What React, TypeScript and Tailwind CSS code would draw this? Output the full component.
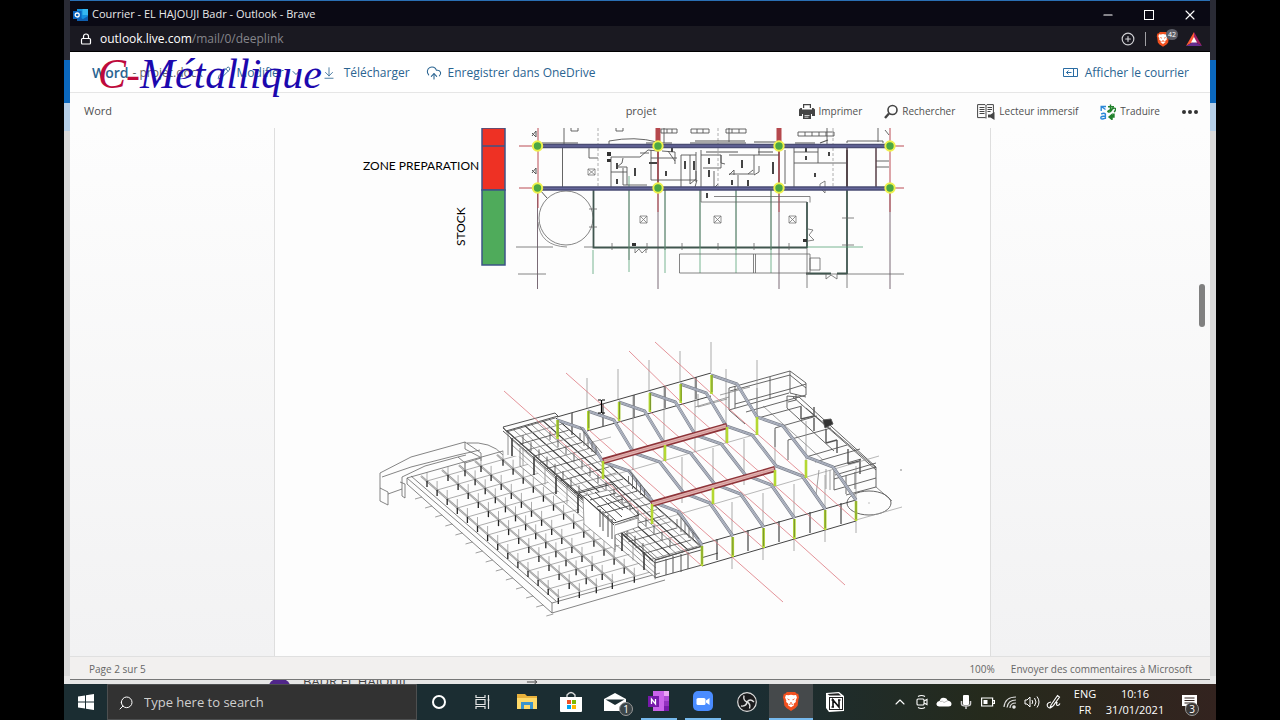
import type { ReactNode } from 'react';
import { ArrowDownToLine, ArrowRight, ChevronDown, ChevronUp, CirclePlus, CloudUpload, Lock, Minus, Pencil, Search, X } from 'lucide-react';

type Point = [number, number];

const toPoints = (pts: Point[]) => pts.map((p) => p.join(',')).join(' ');
const range = (n: number) => Array.from({ length: n }, (_, i) => i);

function OutlookIcon() {
  return (
    <svg viewBox="0 0 16 14" className="h-3.5 w-4">
      <path d="M4 1h11v12H4z" fill="#1490df" />
      <path d="M9.5 1H15v6H9.5z" fill="#35b8f1" />
      <path d="M4 8l6 3 5-3v5H4z" fill="#0f5fb0" />
      <path d="M0 3h8.5v8H0z" fill="#0a63bd" />
      <circle cx="4.2" cy="7" r="2" fill="none" stroke="#fff" strokeWidth="1.3" />
    </svg>
  );
}

function BraveIcon({ className }: { className: string }) {
  return (
    <svg viewBox="0 0 20 22" className={className}>
      <path d="M5.5 1h9l2 2H18l1 4-.7 2-.9 7-2.4 2.7L10 22l-5-3.3L2.6 16 1.7 9 1 7l1-4h1.500z" fill="#f1501f" />
      <path d="M10 4l3 .6 2.600-.4 1 3-1.400 3.200.2 1.800-2.400 1.800.4 1.600L10 18l-3.400-2.400.4-1.600-2.400-1.800.2-1.800L3.400 7.200l1-3L7 4.600z" fill="#fff" />
      <path d="M5.2 8l3.3 1.200-.6 1.300zM14.800 8l-3.300 1.200.6 1.300zM8.800 12.500h2.400L10 13.800z" fill="#f1501f" />
      <path d="M7.500 15l2.500-1 2.500 1" stroke="#f1501f" fill="none" />
    </svg>
  );
}

function BatIcon() {
  return (
    <svg viewBox="0 0 16 14" className="h-3.5 w-4">
      <path d="M8 0L0 14l8-4.500z" fill="#ff5a35" />
      <path d="M8 0l8 14-8-4.500z" fill="#9e1f63" />
      <path d="M0 14h16L8 9.500z" fill="#662d91" />
      <path d="M8 5l-3 5.500h6z" fill="#fff" />
    </svg>
  );
}

function PaneIcon() {
  return (
    <svg viewBox="0 0 16 10" className="h-2.5 w-4" fill="none" stroke="#2a6da4">
      <path d="M.5.5h14v8H.5zM10.500.5v8M3.500 4.500h5M5.500 2.500l-2 2 2 2" />
    </svg>
  );
}

function PrinterIcon() {
  return (
    <svg viewBox="0 0 16 16" className="size-4" fill="#444">
      <path d="M4 0h8v4h-1.200V1.200H5.200V4H4z" />
      <path d="M1.500 4H3v1.500h10V4h1.500L16 5.500V12h-3v-2H3v2H0V5.500z" />
      <path d="M4 9.500h8V15H4zM5.500 11v.8h5V11zm0 1.800v.8h4v-.8z" fillRule="evenodd" />
    </svg>
  );
}

function LoupeIcon() {
  return (
    <svg viewBox="0 0 14 16" className="h-4 w-3.5" fill="none" stroke="#444">
      <circle cx="8.500" cy="6" r="4.500" strokeWidth="1.600" />
      <path d="M5 9.500l-4 4.500" strokeWidth="2.400" />
    </svg>
  );
}

function ReaderIcon() {
  return (
    <svg viewBox="0 0 18 16" className="h-4 w-[18px]" fill="none" stroke="#444">
      <path d="M.6 .6h7.400l1 1 1-1h6.400v9M.6 .6v13h8M9 1.500v13M2.500 3.500h5M2.500 5.500h5M2.500 7.500h5M2.500 9.500h5M10.500 3.500h4.500M10.500 5.500h4.500M10.500 7.500h3" />
      <path d="M11 10.500h2.500l4-2.500v8l-4-2.500H11z" fill="#444" stroke="none" />
    </svg>
  );
}

function TranslateIcon() {
  return (
    <svg viewBox="0 0 16 16" className="size-4" fill="none" strokeWidth="1.400">
      <path d="M6 2.500H1.200V7M1.200 2.500L5.500 5.500" stroke="#2b88d8" />
      <path d="M1.200 10q3-1.500 4.200 0v5M5.400 12Q.6 12 .8 14t4.600.2" stroke="#2b88d8" />
      <path d="M8 2.800h6M10.500.5v7.500M13 3.800q-2 4.700-4.500 4.200T12 5t2.200 3.200" stroke="#21812c" />
      <path d="M14 9.500V13H9.500M12 15.500l-3-2.500L12 10.500z" stroke="#21812c" fill="#21812c" />
    </svg>
  );
}

function Rafters() {
  // six portal frames, each shifted by one bay along the ridge
  const frame: Point[] = [[557, 420], [583, 429], [603, 462], [629, 471], [653, 502], [679, 512], [702, 545]];
  return (
    <g fill="none" strokeLinejoin="round">
      {range(6).map((i) => {
        const pts = toPoints(frame.map(([x, y]) => [x + i * 30.8, y - i * 9]));
        return (
          <g key={i}>
            <polyline points={pts} stroke="#7c818c" strokeWidth="3.2" />
            <polyline points={pts} stroke="#c3c8d6" strokeWidth="1.8" />
            <polyline points={pts} stroke="#858b99" strokeWidth=".6" />
          </g>
        );
      })}
    </g>
  );
}

function StockGrid() {
  const rows = [0, 21, 38, 54, 76];
  return (
    <g fill="none">
      <path d="M407 478l145 125 108-30M407 478v6l145 129 113-33M552 603v10M407 478l96-27M411 476l145 125" stroke="#666" strokeWidth=".8" />
      {[...rows, 92].map((dx) => (
        <g key={dx}>
          <path d={`M${421 + dx} ${476 - dx * 0.28}l138 121`} stroke="#999" strokeWidth="2" />
          <path d={`M${421 + dx} ${476 - dx * 0.28}l138 121`} stroke="#ddd" strokeWidth=".6" />
        </g>
      ))}
      {range(14).map((j) => {
        const x = 427 + j * 10.1;
        const y = 481 + j * 9;
        return (
          <g key={j}>
            <path d={`M${x} ${y}l92 -26`} stroke="#888" strokeWidth=".7" />
            <path d={`M${x - 12} ${y + 18}l7 -2`} stroke="#777" strokeWidth=".7" />
            {rows.map((dx) => (
              <g key={dx}>
                <path d={`M${x + dx} ${y - dx * 0.28 - 9}v10`} stroke="#888" strokeWidth=".7" />
                <path d={`M${x + dx} ${y - dx * 0.28}v6`} stroke="#222" strokeWidth="1.3" />
              </g>
            ))}
          </g>
        );
      })}
    </g>
  );
}

function Mezzanine() {
  return (
    <g fill="none">
      <path d="M503 429l53-15 146 131-46 15v18L520 457l-12-3z" fill="#fdfdfd" />
      <path d="M508 432v23M512 445l145 130M520 448v18l135 111M510 438l146 130" stroke="#777" strokeWidth=".8" />
      {range(14).map((i) => (
        <path key={i} d={`M${512 + i * 11} ${438 + i * 9.5}v18`} stroke={i % 2 ? '#888' : '#222'} strokeWidth={i % 2 ? 0.8 : 1.4} />
      ))}
      {range(9).map((i) => (
        <path key={i} d={`M${507 + i * 6} ${431 - i * 1.7}l146 130`} stroke={i % 3 ? '#777' : '#333'} strokeWidth={i % 3 ? 0.8 : 1.1} />
      ))}
      {range(22).map((i) => (
        <path key={i} d={`M${506 + i * 6.8} ${432 + i * 6.1}l49 -14`} stroke={i % 2 ? '#777' : '#444'} strokeWidth=".8" />
      ))}
      {range(16).map((i) => (
        <path key={i} d={`M${523 + i * 8} ${435 + i * 7.2}v9M${550 + i * 8} ${431 + i * 7.2}v9`} stroke="#555" strokeWidth=".9" />
      ))}
      <path d="M503 427l52-14 3 3-52 15zM503 428l153 132 47-14M503 431l152 132" stroke="#555" />
      <path d="M556 418l147 130" stroke="#333" />
      {/* stair tower breaking the slab edge */}
      <path d="M583 496l25-6 29 27-22 8v25l-31-26z" fill="#fff" stroke="#888" strokeWidth=".8" />
      <path d="M579 493l33-9 27 31-25 8zM584 497l30 28M588 495l28 26M595 492l27 25" stroke="#444" />
      <path d="M590 500l26-7M597 507l26-8M604 513l28-8M606 498l17 12M610 495l18 14M603 511v20M608 515v22M612 519v20M600 509v18" stroke="#555" />
      <path d="M615 525l23-7v9l-23 8v17" fill="#fff" stroke="#777" strokeWidth=".8" />
      {/* short return at the front corner */}
      <path d="M655 560l47-14v19l-47 13zM655 563l46-13M666 559v16M673 556v17M681 554v18M688 552v17M701 558l17-5" stroke="#555" />
    </g>
  );
}

function Annex() {
  return (
    <g fill="none" stroke="#555" strokeWidth=".9">
      <path d="M729 388l61-17 16 12v12M790 371v22l16 4M729 388v22l60-17M735 386v22M770 377v22M806 384l-16 5-55 15M730 391l60-16 16 13M806 395l-60 17M729 410l16 14" />
      <path d="M787 396l12 1 77 70v20l-30 8M787 396v12l47 43M793 397l83 73M788 402l8-2v-6M806 408l70 60" />
      <path d="M801 407v12M814 418v13M826 429v14M837 440v13M848 449v15M860 459v15M801 419l13-3v-9M826 443l11-3M848 464l12-3" strokeWidth="1.4" />
      <path d="M758 418l44-12M775 428l42-12M788 440l43-12M806 457l41-12M815 462l45-13M833 467l28-8M835 475l41-12M775 428v19M788 440v20M876 467l-42 12M834 467v23M846 476v18M855 472v17M834 490l42-12" />
      <path d="M720 395l30-8M695 407l34-10M698 394v13l29-8M757 388v28M763 406l60 54M819 470l-3 25M826 469v20M830 470v20" stroke="#777" strokeWidth=".7" />
      <path d="M823 420l8-1 2 5-8 4z" fill="#333" />
      <ellipse cx="869" cy="503" rx="22" ry="12" />
      <path d="M868.500 503h1M900 470h2M876 487l16 14" strokeWidth=".7" />
    </g>
  );
}

function IsometricView() {
  return (
    <g>
      {/* ramp and tank at the far end */}
      <g fill="none" stroke="#666" strokeWidth=".8">
        <path d="M380 473l31-16 54-15 16 11v8M380 473v15l8 4v13l-8-4v-13M382 477l29-10 47-12 22-5M465 442v7l15 8" />
        <path d="M402 477l23-11 33-9 8-2M458 457l7 6 16-5M465 463v9M402 477v19l3 2v-14l-5-2M388 494l14-5" />
        <path d="M467 443q24-2 36 12" />
      </g>
      <StockGrid />
      <Mezzanine />
      <Annex />

      {/* eaves, base lines and posts */}
      <g fill="none" stroke="#444">
        <path d="M557 417l154-44M587 431l124-35M702 544l154-44M702 566l154-45" />
        <path d="M603 478l154-44M652 522l227-66M856 520l46-13M585 444l26-7" stroke="#999" strokeWidth=".7" />
        {range(5).map((i) => (
          <path key={i} d={`M${572 + i * 31} ${413 - i * 9}v22M${717 + i * 31} ${539 - i * 9}v21`} strokeWidth="1.2" />
        ))}
        {range(5).map((i) => (
          <path
            key={i}
            d={`M${587 + i * 31} ${378 - i * 9}v30M${732 + i * 31} ${502 - i * 9}v67M${633 + i * 31} ${396 - i * 9}v74M${682 + i * 31} ${457 - i * 9}v46`}
            stroke="#888"
            strokeWidth=".7"
          />
        ))}
      </g>

      <g stroke="#dd7880" fill="none" strokeWidth=".8">
        {range(6).map((i) => (
          <path key={i} d={`M${557 + i * 30.8} ${438 - i * 9}l145 128`} />
        ))}
        <path d="M504 391l53 47M566 373l53 47M629 351l52 51M655 342l56 51M732 557l51 45M794 539l51 46" />
      </g>

      <Rafters />
      {/* lattice in the gable frame */}
      {range(3).map((i) => (
        <path key={i} d={`M${580 + i * 48.5} ${427 + i * 43}l22 26m-22-20v8m4-9v14m4-9v12m4-7v10m4-6v7`} fill="none" stroke="#666" strokeWidth=".9" />
      ))}

      {/* crane beams */}
      {([[603, 461], [651, 504]] as Point[]).map(([x, y]) => (
        <g key={x} fill="none">
          <path d={`M${x} ${y}l124 -35`} stroke="#8d3338" strokeWidth="6" />
          <path d={`M${x + 1} ${y}l122 -35`} stroke="#e3b3b1" strokeWidth="3" />
          <path d={`M${x} ${y}l124 -35`} stroke="#c08285" strokeWidth=".5" />
        </g>
      ))}

      {/* columns */}
      <g strokeWidth="2.6" stroke="#b4d832">
        {range(6).map((i) => (
          <path key={i} d={`M${557.5 + i * 30.8} ${420 - i * 9}v19M${702 + i * 30.8} ${546 - i * 9}v20`} />
        ))}
        <path d="M603 461v18M665 445v16M727 427v16M757 417v18M652 504v20M713 488v16M775 470v16M806 460v18" />
      </g>
      <g stroke="#66802c" strokeWidth=".8">
        {range(6).map((i) => (
          <path key={i} d={`M${558 + i * 30.8} ${420 - i * 9}v17M${702 + i * 30.8} ${546 - i * 9}v18`} />
        ))}
      </g>
      <path d="M598 400h3m1 0h3M601.500 400v13M598 413h3m1 0h3" stroke="#000" strokeWidth="1.2" fill="none" />
    </g>
  );
}

function FloorPlan() {
  const axes = [537.5, 658, 779, 890];
  return (
    <g fill="none">
      <path d="M482 128h23v62h-23z" fill="#ee3124" stroke="#3d5486" strokeWidth="1.500" />
      <path d="M482 146h23" stroke="#3d5486" strokeWidth="1.500" />
      <path d="M482 190h23v75h-23z" fill="#4fab5b" stroke="#3d5486" strokeWidth="1.500" />
      <text x="363" y="170" fill="#000" className="font-['Lato',sans-serif] text-[12px]">ZONE PREPARATION</text>
      <text transform="translate(465 246) rotate(-90)" fill="#000" className="font-['Lato',sans-serif] text-[12px]">STOCK</text>

      {/* grid axes */}
      <g stroke="#6b5a66" strokeWidth=".9">
        {axes.map((x) => (
          <path key={x} d={`M${x} 188v101`} />
        ))}
      </g>
      <path d="M538 128v80M658 190v22M779 190v22M890 128v84M519 146h18M519 188h18M890 146h14M890 188h14" stroke="#bb4c55" />
      <path d="M658 128v60M779 128v60" stroke="#8c3038" strokeWidth="1.600" />
      <path d="M658 128v14M779 128v14" stroke="#b5484d" strokeWidth="5" />
      <path d="M516 247h37M518 274h28M584 247h10M806 274h98" stroke="#666" strokeWidth=".8" />

      {/* tank */}
      <circle cx="566" cy="218" r="27" stroke="#777" strokeWidth=".9" />
      <path d="M538 222q2 24 29 25" stroke="#777" strokeWidth=".8" />
      <path d="M540 190l7 8M532 133l4 4v-6l-4 5M532 170l4 4v-6l-4 5" stroke="#555" />

      {/* stock hall walls */}
      <path d="M593.500 190v57.500H807M807 202v46M847 150v124M806 273.500h25M837 273.500h10" stroke="#40564f" strokeWidth="1.800" />
      <path d="M629 176v96M665 190v83M700 190v83M736 190v83M771 190v83M593 250v24M807 247h56" stroke="#55a277" strokeWidth=".8" />
      <path d="M629 190v70M665 190v60M700 190v58M736 190v60M771 190v60" stroke="#5b6f66" strokeWidth=".8" />
      <path d="M612 243v7M647 243v7M682 243v7M718 243v7M754 243v7M789 243v7M589 209h8M589 227h8M842 218h12M842 245h12" stroke="#666" strokeWidth=".8" />
      <path d="M679.500 254H810v19H679.500zM753.500 254v19M755.500 254v19M810 258h10v12h-10zM701 190v12h106M714 196.500h96v6M847 274v14M807 248v40" stroke="#666" strokeWidth=".8" />
      <path d="M635 249v4l4-4 3 4 4-4v4M826 274v5l5-4 6 4v-5M808 229l5 1-4 5 5 5-6 1M825 185v-4l-5 3v4l5 5v-8" stroke="#666" strokeWidth=".8" />
      <path d="M632 243h4v3h-4zM803 239h4v3h-4zM607 152h4v4h-4zM607 159h4v3h-4z" fill="#333" />
      {[643, 717, 792].map((x) => (
        <path key={x} d={`M${x - 3} 216h7v7h-7zl7 7m0-7l-7 7`} stroke="#777" strokeWidth=".8" />
      ))}
      <path d="M588 169h7v6h-7zl7 6m0-6l-7 6" stroke="#777" strokeWidth=".8" />

      {/* rooms of the preparation zone */}
      <path d="M564 128v18M562.500 148v40M589 148v10h9M611 157v30M611 172h16M611 157h29l8-7 10 1M623 158l-1 5-5 4h10v18M623 168v17h24M640 153h9M651 158h26M651 150v30h30M662 151l13 1v12M668 151l7 10M681 155v33M681 155h15M690 155v29M696 152v30M701 150v40M701 155h20v8l4 1M703 168h18v-13M729 155h30v-8M729 174h24M738 175v13M754 155v20l5-3v-6M759 155h20M785 150v34M794 147v40M794 152h24M794 163h52M818 148v15M876 161h13M876 167h13M690 184l6-5v-8M681 180h16l-2 7M714 171v17l4-4M729 175l5-5v5M748 174l5-4" stroke="#555" strokeWidth=".9" />
      <path d="M598 128v60M718 128v60M833 128v60" stroke="#999" strokeWidth=".8" strokeDasharray="3 2" />
      <path d="M847 148v40M876 148v40" stroke="#573f47" strokeWidth="1.500" />
      <path d="M617 163v6M617 179v5M635 168v8M666 171v5M685 161v8M694 161v9M709 158v6M709 170v7M742 160v8M732 180v5M748 180v6M773 162v12M815 173v4M806 148v4M806 156v4M829 152v4M707 193v5M672 148v4M649 163h8" stroke="#444" strokeWidth="2" />
      <path d="M661 129h16v4h-16zM691 129h18v4h-18zM726 129h20v4h-20zM798 132h36v4h-36zM667 129v4M672 129v4M697 129v4M703 129v4M732 129v4M739 129v4M805 132v4M812 132v4M819 132v4M826 132v4M571 128v3h7v-3M616 128v3h7v-3M664 128v15M729 128v14M827 128v16M878 128v14M885 130l4 5M847 143v-2h36v2M609 145v-4q26-5 48 1" stroke="#555" strokeWidth=".9" />
      <path d="M646 143h26M690 143h56M695 141h50M754 142h22M795 143h20M820 143l8-3M542 143h36M706 152h32M758 152h15" stroke="#555" strokeWidth="1.200" />

      <path d="M537 146h353M537 188.500h353" stroke="#4a4c74" strokeWidth="4.500" />
      <path d="M537 146h353M537 188.500h353" stroke="#64669a" strokeWidth="1.600" />
      {axes.map((x) =>
        [146, 188].map((y) => <circle key={`${x}-${y}`} cx={x} cy={y} r="4.700" fill="#4aa745" stroke="#eef14c" strokeWidth="2" />)
      )}
    </g>
  );
}

function TitleBar() {
  return (
    <header className="flex h-[26px] items-center border-t border-[#2a6fb4] bg-[#0a0914] pt-0.5 pl-[3px] text-[#e8e8ea]">
      <OutlookIcon />
      <h1 className="ml-[3px] text-[11px]">Courrier - EL HAJOUJI Badr - Outlook - Brave</h1>
      <div className="ml-auto flex items-center text-white">
        <button aria-label="Réduire" className="flex w-[41px] justify-center"><Minus className="size-3.5" strokeWidth={2} /></button>
        <button aria-label="Agrandir" className="flex w-[41px] justify-center">
          <span className="size-2.5 border border-white" />
        </button>
        <button aria-label="Fermer" className="flex w-[41px] justify-center"><X className="size-4" strokeWidth={1.6} /></button>
      </div>
    </header>
  );
}

function AddressBar() {
  return (
    <div className="flex h-[26px] items-center border-b border-black bg-[#1a1921] pr-2 pl-2.5">
      <Lock className="size-3 text-white" strokeWidth={2.4} />
      <p className="ml-2 text-xs text-white">
        outlook.live.com<span className="text-[#85858b]">/mail/0/deeplink</span>
      </p>
      <div className="ml-auto flex items-center">
        <button aria-label="Zoom"><CirclePlus className="size-3.5 text-[#d0d0d4]" /></button>
        <span className="mx-2.5 h-3.5 w-px bg-[#a0a0a4]" />
        <button aria-label="Brave Shields" className="relative mr-4">
          <BraveIcon className="h-4 w-3.5" />
          <span className="absolute -top-0.5 left-2.5 rounded-full bg-[#5c5e68] px-0.5 text-[7px] leading-[11px] text-white">42</span>
        </button>
        <button aria-label="Brave Rewards"><BatIcon /></button>
      </div>
    </div>
  );
}

function MailToolbar() {
  return (
    <div className="relative flex h-[41px] items-center border-b border-[#e6e6e6] bg-white pt-0.5 pr-[21px] pl-[22px] text-xs text-[#2a6491]">
      <span className="text-sm font-semibold">Word</span>
      <span className="ml-1 w-20 text-[#666]">- projet.docx</span>
      <button className="ml-1 flex items-center gap-1.5"><Pencil className="size-3.5" strokeWidth={1.5} /> Modifier <ChevronDown className="size-3" /></button>
      <button className="ml-5 flex items-center gap-2"><ArrowDownToLine className="size-3.5" strokeWidth={1.4} /> Télécharger</button>
      <button className="ml-4 flex items-center gap-1.5"><CloudUpload className="size-4" strokeWidth={1.6} /> Enregistrer dans OneDrive</button>
      <button className="ml-auto flex items-center gap-1.5"><PaneIcon /> Afficher le courrier</button>
      <p className="absolute top-0 left-7 font-['Liberation_Serif',serif] text-[42px] leading-[44px] whitespace-nowrap text-[#1c08ae] italic">
        <span className="text-[#be0a3c]">C-</span>Métallique
      </p>
    </div>
  );
}

function ViewerAction({ icon, label }: { icon: ReactNode; label: string }) {
  return (
    <button className="flex items-center gap-1">
      {icon}
      {label}
    </button>
  );
}

function ViewerBar() {
  return (
    <div className="grid h-[35px] grid-cols-[1fr_auto_1fr] items-center bg-[#fdfdfd] pt-0.5 pr-3 pl-3.5 text-[11px] text-[#505050]">
      <span>Word</span>
      <h2>projet</h2>
      <div className="flex items-center justify-end gap-[22px] text-[10px]">
        <ViewerAction icon={<PrinterIcon />} label="Imprimer" />
        <ViewerAction icon={<LoupeIcon />} label="Rechercher" />
        <ViewerAction icon={<ReaderIcon />} label="Lecteur immersif" />
        <ViewerAction icon={<TranslateIcon />} label="Traduire" />
        <button aria-label="Plus" className="flex gap-0.5">
          {range(3).map((i) => <span key={i} className="size-1 rounded-full bg-[#333]" />)}
        </button>
      </div>
    </div>
  );
}

function Taskbar() {
  const app = 'flex w-11 items-center justify-center';
  const openApp = 'mx-1 flex w-9 items-center justify-center border-b-2 border-[#76b9ed]';
  const tray = 'flex w-[22px] items-center justify-center';
  return (
    <footer className="relative flex h-9 shrink-0 bg-linear-to-r from-[#1b2d32] from-60% via-[#252a1c] via-80% to-[#33231f] text-white">
      <button aria-label="Start" className="flex w-[43px] items-center justify-center">
        <svg viewBox="0 0 16 16" className="size-4" fill="#fff"><path d="M0 2.500l7-1v6H0zM8 1.300l8-1.200v7.400H8zM0 8.500h7v6l-7-1zM8 8.500h8v7.400l-8-1.200z" /></svg>
      </button>
      <label className="flex w-[310px] items-center gap-2.5 border border-[#4d4f50] bg-[#323232] px-2.5 pt-0.5">
        <Search className="size-4 shrink-0 -scale-x-100" strokeWidth={1.5} />
        <input type="text" aria-label="Search" placeholder="Type here to search" className="w-full bg-transparent text-[13px] outline-none placeholder:text-[#cfcfcf]" />
      </label>
      <button aria-label="Cortana" className={app}><span className="size-3.5 rounded-full border-2 border-white" /></button>
      <button aria-label="Task view" className={app}>
        <svg viewBox="0 0 16 16" className="size-4" fill="none" stroke="#e8e8e8" strokeWidth="1.200"><path d="M1 1v2.500h9V1M1 5.500h9v5H1zM1 15v-2.500h9V15M13.500 1v14M12.500 6h2" /></svg>
      </button>
      <button aria-label="File Explorer" className={app}>
        <svg viewBox="0 0 20 18" className="h-[18px] w-5"><path d="M0 1h8l2 2h10v13H0z" fill="#e9b13b" /><path d="M0 5h20v11H0z" fill="#ffd968" /><path d="M4 9h12v7h-3v-4H7v4H4z" fill="#3b93cc" /></svg>
      </button>
      <button aria-label="Microsoft Store" className={app}>
        <svg viewBox="0 0 22 22" className="size-[22px]"><path d="M7 7V4q4-5 8 0v3" fill="none" stroke="#ddd" strokeWidth="1.300" /><path d="M0 6h22v14q0 1-1 1H1q-1 0-1-1z" fill="#fff" /><path d="M7 9h4v4H7z" fill="#f25022" /><path d="M12 9h4v4h-4z" fill="#7fba00" /><path d="M7 14h4v4H7z" fill="#00a4ef" /><path d="M12 14h4v4h-4z" fill="#ffb900" /></svg>
      </button>
      <button aria-label="Mail" className={`${app} relative`}>
        <svg viewBox="0 0 22 18" className="h-[18px] w-[22px]"><path d="M0 6l11-6 11 6v12H0z" fill="#fff" /><path d="M1.500 6.500h19L11 12z" fill="#1b2d32" /></svg>
        <span className="absolute right-1 bottom-1 size-3.5 rounded-full border border-[#9a9a9a] bg-[#3b4548] text-center text-[10px] leading-3">1</span>
      </button>
      <button aria-label="OneNote" className={openApp}>
        <svg viewBox="0 0 22 20" className="h-5 w-[22px]"><path d="M5 0h16v20H5z" fill="#ca64ea" /><path d="M16 0h5v5h-5z" fill="#e9a5f5" /><path d="M16 5h5v5h-5z" fill="#ae4bd5" /><path d="M16 10h5v5h-5z" fill="#9332bf" /><path d="M16 15h5v5h-5z" fill="#7719aa" /><path d="M0 5h11v11H0z" fill="#7719aa" /><path d="M3.500 13V8l4 5V8" fill="none" stroke="#fff" strokeWidth="1.300" /></svg>
      </button>
      <button aria-label="Zoom" className={openApp}>
        <svg viewBox="0 0 20 20" className="size-5"><rect width="20" height="20" rx="5" fill="#4a8cff" /><rect x="3.500" y="7" width="9" height="7" rx="1.500" fill="#fff" /><path d="M13 9.500l3.500-2.500v7L13 11.500z" fill="#fff" /></svg>
      </button>
      <button aria-label="OBS" className={app}>
        <svg viewBox="0 0 20 20" className="size-5" fill="none" stroke="#ddd"><circle cx="10" cy="10" r="9.300" fill="#1b1b1d" strokeWidth="1.200" /><path d="M7 3.500q-1 5 3 6.500M10 10q3-4 7 0M10 10q-1 5-6 4M10 10q4 2 2.500 6.500" strokeWidth="1.400" /></svg>
      </button>
      <button aria-label="Brave" className={`${app} border-b-2 border-[#76b9ed] bg-[#45494b]`}><BraveIcon className="h-5 w-[18px]" /></button>
      <button aria-label="Notion" className={app}>
        <svg viewBox="0 0 20 20" className="size-5"><path d="M1 1l13-1 5 4v15l-15 1-3-4z" fill="#fff" /><path d="M4 5h14v13H4zM2.500 2l11-.8L16 3.500H4.500z" fill="#222" /><path d="M5 6h12v11H5z" fill="#fff" /><path d="M8 15V8l6 7V8M6.500 8H9M13 8h2.500M6.500 15H9" fill="none" stroke="#111" strokeWidth="1.600" /></svg>
      </button>

      <div className="mr-px ml-auto flex">
        <button aria-label="Hidden icons" className={tray}><ChevronUp className="size-4" strokeWidth={1.6} /></button>
        <button aria-label="Meet Now" className={tray}>
          <svg viewBox="0 0 14 16" className="h-4 w-3.5" fill="none" stroke="#fff" strokeWidth="1.100"><path d="M3 2.500q3.500-2 7 0M3 13.500q3.500 2 7 0" /><rect x="2" y="5" width="7" height="6" rx="1" /><path d="M9 7l3-1.500v5L9 9" /></svg>
        </button>
        <button aria-label="OneDrive" className={tray}>
          <svg viewBox="0 0 16 10" className="h-2.5 w-4"><path d="M3 9.500Q0 9 .5 6.500 1 4 3.500 4 5-.5 9 1q2 0 2.500 2.500Q15.500 4 15.500 7q0 2.500-3 2.500z" fill="#fff" /><path d="M4 4.500q3-1 4 1l4-2" stroke="#bbb" fill="none" /></svg>
        </button>
        <button aria-label="Microphone" className={tray}>
          <svg viewBox="0 0 12 16" className="h-4 w-3"><rect x="3" y="1" width="6" height="10" rx="1" fill="#fff" /><path d="M1.500 7v3q0 2 4.500 2t4.500-2V7M6 12v3" stroke="#ccc" fill="none" strokeWidth="1.500" /></svg>
        </button>
        <button aria-label="Battery" className={tray}>
          <svg viewBox="0 0 14 10" className="h-2.5 w-3.5"><path d="M.6 1h11v8H.6zM12 3.500h1.400v3H12" fill="none" stroke="#fff" strokeWidth="1.200" /><path d="M2.500 3h4v4h-4z" fill="#fff" /></svg>
        </button>
        <button aria-label="Wi-Fi" className={tray}>
          <svg viewBox="0 0 14 14" className="size-3.5" fill="none" stroke="#ddd" strokeWidth="1.200"><path d="M1 12Q2 2 13 2M4 12.500Q5 5 13 5M7 13q0-5 6-5" /><circle cx="11" cy="12" r="1.200" fill="#fff" /></svg>
        </button>
        <button aria-label="Volume" className={tray}>
          <svg viewBox="0 0 16 14" className="h-3.5 w-4" fill="none" stroke="#fff"><path d="M1 5h2l3-3v10L3 9H1zM8 5q1.500 2 0 4M10.500 3q3 4 0 8M13 1.500q4 5.500 0 11" /></svg>
        </button>
        <button aria-label="Windows Ink" className={tray}>
          <svg viewBox="0 0 16 16" className="size-4" fill="none" stroke="#fff" strokeWidth="1.100"><path d="M5 11l6.500-9.500 2 1.500L7 12l-3 1.500zM5 8Q0 9 1.500 12.500 4 16 8 11q1-3 3-2.500-1 3 .5 3t2.500-2" /></svg>
        </button>
        <button className="flex w-10 flex-col items-center justify-center text-[11px] leading-4"><span>ENG</span><span>FR</span></button>
        <button className="flex w-[60px] flex-col items-center justify-center text-[11px] leading-4"><span>10:16</span><span>31/01/2021</span></button>
        <button aria-label="Notifications" className="relative flex w-[50px] items-center justify-center">
          <svg viewBox="0 0 16 16" className="size-4"><path d="M0 1h15v11H7l-3.500 3V12H0z" fill="#fff" /><path d="M2.500 4h10M2.500 6.500h10M2.500 9h7" stroke="#33231f" /></svg>
          <span className="absolute right-4 bottom-1 size-3.5 rounded-full border border-[#999] bg-[#3b3735] text-center text-[10px] leading-3">3</span>
        </button>
      </div>
    </footer>
  );
}

export default function App() {
  return (
    <div className="h-screen overflow-hidden bg-black px-[5%] font-['Open_Sans','Noto_Sans',sans-serif]">
      <div className="flex h-full flex-col">
        <main className="relative flex min-h-0 flex-1 flex-col px-1.5 pb-1">
          {/* inbox left open behind the viewer */}
          <div className="absolute inset-0 flex flex-col overflow-hidden bg-[#d9d9d9]" aria-hidden="true">
            <div className="h-[60px] bg-[#2a2b35]" />
            <div className="h-[43px] bg-[#0b68be]" />
            <div className="h-[28px] bg-[#b5cfe8]" />
            <div className="mt-auto flex h-2 items-start overflow-hidden bg-[#e6e6e6] pl-[204px]">
              <span className="mt-0.5 size-[23px] shrink-0 rounded-full bg-[#50268a]" />
              <span className="-mt-1 ml-3 text-[13px] leading-[18px] whitespace-nowrap text-[#444]">BADR EL HAJOUJI</span>
              <ArrowRight className="-mt-0.5 ml-[118px] size-4 shrink-0 text-[#444]" strokeWidth={1.5} />
            </div>
          </div>

          <section className="relative flex min-h-0 flex-1 flex-col border-b border-[#777] bg-white">
            <TitleBar />
            <AddressBar />
            <MailToolbar />
            <ViewerBar />
            <div className="flex min-h-0 flex-1 bg-linear-to-b from-[#fdfdfd] to-[#f2f2f3]">
              <div className="flex min-w-0 flex-1 justify-center overflow-hidden">
                <article className="w-[717px] border-x border-[#dedede] bg-[#fdfdfd]">
                  <svg viewBox="275 128 715 528" className="w-full" role="img" aria-label="Plan et vue isométrique du bâtiment">
                    <FloorPlan />
                    <IsometricView />
                  </svg>
                </article>
              </div>
              <div className="w-[15px] pt-[156px]">
                <div className="ml-1 h-[43px] w-1.5 rounded-full bg-[#808080]" />
              </div>
            </div>
            <div className="flex h-[23px] items-center border-t border-[#e0e0e0] bg-[#f2f0ef] pt-0.5 pr-[18px] pl-[19px] text-[10px] text-[#666]">
              <span>Page 2 sur 5</span>
              <span className="ml-auto">100%</span>
              <button className="ml-4">Envoyer des commentaires à Microsoft</button>
            </div>
          </section>
        </main>
        <Taskbar />
      </div>
    </div>
  );
}
